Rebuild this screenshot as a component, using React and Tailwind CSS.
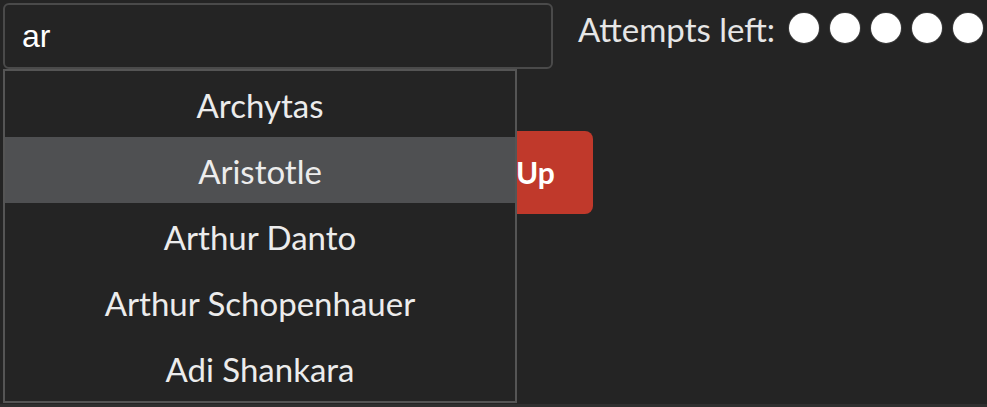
import { useState } from 'react';

const options = ['Archytas', 'Aristotle', 'Arthur Danto', 'Arthur Schopenhauer', 'Adi Shankara'];

const App = () => {
  const [query, setQuery] = useState('ar');
  const [active, setActive] = useState(1);
  const attempts = 5;

  return (
    <div className="bg-[#2f2f2f] min-h-[407px]" style={{ fontFamily: 'Lato, "Noto Sans", sans-serif' }}>
      <div className="relative h-[404px] bg-[#242424] pl-[3px] pt-[3px] overflow-hidden">
        {/* Top row */}
        <div className="flex items-start">
          <input
            type="text"
            value={query}
            onChange={(e) => setQuery(e.target.value)}
            style={{ fontFamily: '"Liberation Sans", Arial, sans-serif' }}
            className="w-[550px] h-[66px] shrink-0 rounded-md border-2 border-[#4a4a4a] bg-[#242424] px-[17px] text-[32px] text-white outline-none"
          />
          <div className="ml-[25px] mt-[8px] flex items-center whitespace-nowrap text-[33px] leading-[36px] text-[#e6e6e6]">
            <span>Attempts left:</span>
            <div className="ml-[14px] -mt-[3px] flex gap-[11px]">
              {Array.from({ length: attempts }).map((_, i) => (
                <span key={i} className="block w-[30px] h-[30px] shrink-0 rounded-full bg-white ring-1 ring-[#3a3a3a]" />
              ))}
            </div>
          </div>
        </div>

        {/* Give up */}
        <div className="mt-[62px] flex pl-[407px]">
          <button className="h-[83px] rounded-lg bg-[#c0392b] px-[38px] text-[30px] font-bold text-white">
            Give Up
          </button>
        </div>

        {/* Suggestions */}
        <ul className="absolute left-[3px] top-[69px] w-[514px] border-2 border-[#555555] bg-[#242424]">
          {options.map((name, i) => (
            <li
              key={name}
              onMouseEnter={() => setActive(i)}
              className={
                'flex h-[66px] items-center justify-center pt-[4px] text-[33px] text-[#ececec] ' +
                (i === active ? 'bg-[#4f5052]' : '')
              }
            >
              {name}
            </li>
          ))}
        </ul>
      </div>
    </div>
  );
};

export default App;
